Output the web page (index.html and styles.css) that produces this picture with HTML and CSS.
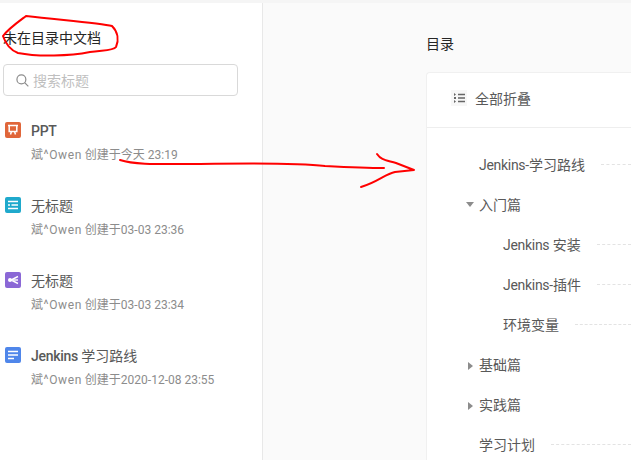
FILE: index.html
```html
<!DOCTYPE html>
<html lang="zh">
<head>
<meta charset="utf-8">
<title>目录</title>
<link rel="stylesheet" href="styles.css">
</head>
<body>
<div class="app">
  <aside class="side">
    <h2 class="side-title">未在目录中文档</h2>
    <div class="search">
      <svg class="search-icon" viewBox="0 0 14 14"><circle cx="5.8" cy="5.8" r="4.8"/><path d="M9.300 9.300 13.300 13.300"/></svg>
      <span>搜索标题</span>
    </div>
    <ul class="docs">
      <li class="doc">
        <svg class="doc-icon" viewBox="0 0 16 16"><rect width="16" height="16" rx="2" fill="#e0663a"/><path d="M3 3.500h10M4.200 4v5.500h7.600V4M5.500 12.500 6.500 9.500M10.500 12.500 9.500 9.500" fill="none" stroke="#fff" stroke-width="1.500"/></svg>
        <div><div class="doc-name"><span class="en bold">PPT</span></div><div class="doc-meta"><span class="author">斌^Owen</span> 创建于今天 23:19</div></div>
      </li>
      <li class="doc">
        <svg class="doc-icon" viewBox="0 0 16 16"><rect width="16" height="16" rx="2" fill="#1fa9cc"/><path d="M3 4.500h10M3 8h2M6.500 8H13M3 11.500h10" stroke="#fff" stroke-width="1.400"/></svg>
        <div><div class="doc-name">无标题</div><div class="doc-meta"><span class="author">斌^Owen</span> 创建于03-03 23:36</div></div>
      </li>
      <li class="doc">
        <svg class="doc-icon" viewBox="0 0 16 16"><rect width="16" height="16" rx="2" fill="#8b68d6"/><path d="M13 4.500 6 8l7 3.500" fill="none" stroke="#fff" stroke-width="1.400"/><path d="M8 8h5" stroke="#fff" stroke-width="1.400"/><circle cx="5" cy="8" r="2" fill="#fff"/></svg>
        <div><div class="doc-name">无标题</div><div class="doc-meta"><span class="author">斌^Owen</span> 创建于03-03 23:34</div></div>
      </li>
      <li class="doc">
        <svg class="doc-icon" viewBox="0 0 16 16"><rect width="16" height="16" rx="2" fill="#4f86ea"/><path d="M3 4.500h10M3 8h10M3 11.500h6" stroke="#fff" stroke-width="1.400"/></svg>
        <div><div class="doc-name"><span class="en bold">Jenkins</span> 学习路线</div><div class="doc-meta"><span class="author">斌^Owen</span> 创建于2020-12-08 23:55</div></div>
      </li>
    </ul>
  </aside>
  <main class="main">
    <h2 class="main-title">目录</h2>
    <section class="card">
      <header class="card-head">
        <svg class="fold-icon" viewBox="0 0 16 16"><rect width="16" height="16" fill="#f7f7f7"/><path d="M3 3v3l2-1.500zM3 10v3l2-1.500z" fill="#666"/><path d="M7 4.500h7M7 8h7M7 11.500h7" stroke="#666" stroke-width="1.300"/><path d="M3 7h2v2H3z" fill="#666"/></svg>
        <span>全部折叠</span>
      </header>
      <ul class="toc">
        <li class="row"><span><span class="en">Jenkins</span>-学习路线</span><i class="dash"></i></li>
        <li class="row"><span class="caret down"></span><span>入门篇</span></li>
        <li class="row child"><span><span class="en">Jenkins</span> 安装</span><i class="dash"></i></li>
        <li class="row child"><span><span class="en">Jenkins</span>-插件</span><i class="dash"></i></li>
        <li class="row child"><span>环境变量</span><i class="dash"></i></li>
        <li class="row"><span class="caret right"></span><span>基础篇</span></li>
        <li class="row"><span class="caret right"></span><span>实践篇</span></li>
        <li class="row"><span>学习计划</span><i class="dash"></i></li>
      </ul>
    </section>
  </main>
</div>
<svg class="ink" viewBox="0 0 631 460">
  <path d="M26 16C18 22 8 29 3 36 5 42 10 50 18 53 38 57 70 56 90 52 102 50 113 51 116 47 119 40 118 32 112 26 100 23 60 20 26 16Z"/>
  <path d="M120 160C135 165 160 164 200 164 260 163 300 163 325 166 345 167 370 168 384 168"/>
  <path d="M377 154C381 160 386 160 396 163L414 170 395 172C385 174 378 182 361 187"/>
</svg>
</body>
</html>
```
FILE: styles.css
```css
* { box-sizing: border-box; }
html, body { margin: 0; height: 100%; overflow: hidden; }
body { font-family: Roboto, "Noto Sans CJK SC", sans-serif; color: #595959; background: #fff; }
ul { list-style: none; margin: 0; padding: 0; }
h2 { margin: 0; font-weight: 400; font-size: 14px; color: #262626; }

.app { display: flex; height: 460px; border-top: 3px solid #f5f5f5; overflow: hidden; }
.side { width: 263px; flex: none; padding: 0 24px 0 3px; border-right: 1px solid #e8e8e8; background: #fff; }
.side-title { height: 22px; line-height: 22px; margin-top: 24px; }
.search { display: flex; align-items: center; gap: 4px; width: 235px; height: 32px; margin-top: 15px; padding-left: 12px; border: 1px solid #d9d9d9; border-radius: 4px; font-size: 14px; color: #bfbfbf; }
.search-icon { width: 13px; height: 13px; fill: none; stroke: #8c8c8c; stroke-width: 1.3; }
.docs { margin-top: 24px; padding-left: 2px; }
.doc { display: flex; gap: 10px; height: 75px; }
.doc-icon { width: 16px; height: 16px; flex: none; margin-top: 2px; }
.doc-name { height: 22px; line-height: 22px; font-size: 14px; color: #595959; }
.en { letter-spacing: -0.3px; }
.bold { font-weight: 500; }
.author { letter-spacing: 0.6px; }
.doc-meta { margin-top: 4px; height: 18px; line-height: 18px; font-size: 12px; color: #8c8c8c; white-space: nowrap; }

.main { flex: 1; min-width: 0; padding: 30px 0 0 163px; background: #fafafa; }
.main-title { height: 22px; line-height: 22px; }
.card { height: 400px; margin-top: 17px; background: #fff; border: 1px solid #f0f0f0; border-right: 0; border-radius: 4px 0 0 0; }
.card-head { display: flex; align-items: center; gap: 8px; height: 55px; padding: 0 0 4px 24px; border-bottom: 1px solid #eee; font-size: 14px; }
.fold-icon { width: 16px; height: 16px; }
.toc { padding-top: 16px; }
.row { display: flex; align-items: center; height: 40px; padding-left: 52px; font-size: 14px; position: relative; white-space: nowrap; }
.row.child { padding-left: 76px; }
.caret { position: absolute; top: 18px; width: 0; height: 0; }
.caret.down { border: 4px solid transparent; border-top: 5px solid #8c8c8c; border-bottom: 0; left: 39px; }
.caret.right { border: 4px solid transparent; border-left: 5px solid #8c8c8c; border-right: 0; left: 41px; }
.dash { flex: 1; margin-left: 16px; border-top: 1px dashed #e3e3e3; }

.ink { position: absolute; left: 0; top: 0; width: 631px; height: 460px; fill: none; stroke: #f00; stroke-width: 2; stroke-linejoin: round; stroke-linecap: round; pointer-events: none; }
```
